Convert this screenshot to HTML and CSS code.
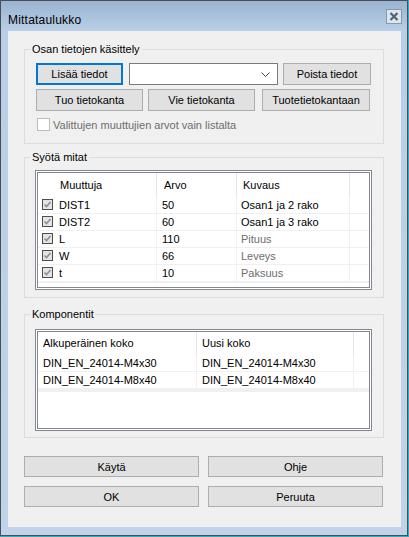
FILE: index.html
```html
<!DOCTYPE html>
<html>
<head>
  <meta charset="UTF-8">
  <title>Mittataulukko</title>
  <link rel="stylesheet" href="styles.css">
</head>
<body>
  <div class="window">
    <div class="titlebar">
      <span class="title">Mittataulukko</span>
      <button class="close" title="Sulje">
        <svg width="14" height="13" viewBox="0 0 14 13"><path d="M3.5 3 L10.5 10 M10.5 3 L3.5 10" stroke="#55616e" stroke-width="2.2"/></svg>
      </button>
    </div>

    <div class="client">
      <fieldset class="group group-data">
        <legend>Osan tietojen käsittely</legend>
        <div class="group-body">
          <div class="btn-row">
            <button class="btn btn-default w-add">Lisää tiedot</button>
            <div class="combo">
              <svg width="9" height="5" viewBox="0 0 9 5"><polyline points="0.5,0.5 4.5,4.5 8.5,0.5" fill="none" stroke="#444" stroke-width="1"/></svg>
            </div>
            <button class="btn w-remove">Poista tiedot</button>
          </div>
          <div class="btn-row row-db">
            <button class="btn w-import">Tuo tietokanta</button>
            <button class="btn w-export">Vie tietokanta</button>
            <button class="btn w-product">Tuotetietokantaan</button>
          </div>
          <label class="check disabled">
            <span class="check-box"></span>
            Valittujen muuttujien arvot vain listalta
          </label>
        </div>
      </fieldset>

      <fieldset class="group group-dims">
        <legend>Syötä mitat</legend>
        <div class="group-body">
          <div class="listview">
            <div class="listview-inner">
              <table class="list list-dims">
                <colgroup><col style="width:119px"><col style="width:80px"><col style="width:113px"><col></colgroup>
                <thead>
                  <tr><th class="h-var">Muuttuja</th><th class="h-val">Arvo</th><th class="h-desc">Kuvaus</th><th class="h-fill"></th></tr>
                </thead>
                <tbody id="dims-body"></tbody>
              </table>
            </div>
          </div>
        </div>
      </fieldset>

      <fieldset class="group group-parts">
        <legend>Komponentit</legend>
        <div class="group-body">
          <div class="listview listview-parts">
            <div class="listview-inner">
              <table class="list list-parts">
                <colgroup><col style="width:159px"><col style="width:157px"><col></colgroup>
                <thead>
                  <tr><th>Alkuperäinen koko</th><th>Uusi koko</th><th class="h-fill"></th></tr>
                </thead>
                <tbody>
                  <tr><td>DIN_EN_24014-M4x30</td><td>DIN_EN_24014-M4x30</td><td class="fill"></td></tr>
                  <tr><td>DIN_EN_24014-M8x40</td><td>DIN_EN_24014-M8x40</td><td class="fill"></td></tr>
                  <tr><td></td><td></td><td class="fill"></td></tr>
                  <tr><td></td><td></td><td class="fill"></td></tr>
                  <tr><td></td><td></td><td class="fill"></td></tr>
                </tbody>
              </table>
            </div>
          </div>
        </div>
      </fieldset>

      <div class="actions">
        <button class="btn">Käytä</button>
        <button class="btn">Ohje</button>
        <button class="btn">OK</button>
        <button class="btn">Peruuta</button>
      </div>
    </div>
  </div>

  <script>
    // Mitat: nimi, arvo, kuvaus, onko kuvaus oletusteksti (harmaa)
    const dims = [
      ['DIST1', '50', 'Osan1 ja 2 rako', false],
      ['DIST2', '60', 'Osan1 ja 3 rako', false],
      ['L', '110', 'Pituus', true],
      ['W', '66', 'Leveys', true],
      ['t', '10', 'Paksuus', true]
    ];

    const checkSvg = '<svg class="row-check" width="11" height="11" viewBox="0 0 11 11">' +
      '<rect x="0.5" y="0.5" width="10" height="10" fill="#e4e4e4" stroke="#4d4d4d"/>' +
      '<polyline points="2.5,5.5 4.5,7.5 8.5,3" fill="none" stroke="#8f8f8f" stroke-width="1.6"/></svg>';

    function renderDims() {
      const body = document.getElementById('dims-body');
      body.innerHTML = dims.map(d => `
        <tr>
          <td class="var">${checkSvg}${d[0]}</td>
          <td class="val">${d[1]}</td>
          <td class="desc ${d[3] ? 'muted' : ''}">${d[2]}</td>
          <td class="fill"></td>
        </tr>
      `).join('') + '<tr><td></td><td></td><td></td><td class="fill"></td></tr>';
    }

    renderDims();
  </script>
</body>
</html>
```

FILE: styles.css
```css
* {
  box-sizing: border-box;
}

body {
  margin: 0;
  background: #38a7c0;
  font-family: "Liberation Sans", Arial, sans-serif;
  font-size: 11px;
  color: #000;
}

.window {
  width: 408px;
  height: 536px;
  border: 1px solid #4a4f55;
  background: linear-gradient(#99b4d1, #b9cfe7 30px, #bfd4ea);
  display: flex;
  flex-direction: column;
}

/* Title bar */
.titlebar {
  height: 30px;
  display: flex;
  justify-content: space-between;
  align-items: flex-start;
  padding: 0 5px 0 7px;
}

.title {
  padding-top: 12px;
  font-size: 12px;
  line-height: 14px;
  letter-spacing: 0.2px;
}

.close {
  margin-top: 8px;
  width: 16px;
  height: 15px;
  padding: 0;
  border: 1px solid #8799ad;
  background: #dbe5ef;
  display: flex;
  align-items: center;
  justify-content: center;
}

/* Client area */
.client {
  flex: 1;
  margin: 0 6px 8px 7px;
  background: #f0f0f0;
  padding: 0 17px 0 16px;
}

.group {
  margin: 0;
  padding: 0;
  border: 1px solid #dcdcdc;
  min-width: 0;
}

.group legend {
  margin-left: 5px;
  padding: 0 2px;
  line-height: 13px;
}

.group-data {
  margin-top: 12px;
}

.group-data .group-body {
  padding: 7px 0 10px 11px;
}

.group-dims {
  margin-top: 7px;
}

.group-dims .group-body {
  padding: 6px 0 7px 10px;
}

.group-parts {
  margin-top: 10px;
}

.group-parts .group-body {
  padding: 8px 0 6px 10px;
}

/* Buttons */
.btn {
  height: 22px;
  padding: 0;
  border: 1px solid #adadad;
  background: #e1e1e1;
  font-family: inherit;
  font-size: 11px;
  color: #000;
}

.btn-default {
  border: 2px solid #0078d7;
}

.btn-row {
  display: flex;
}

.row-db {
  margin-top: 4px;
}

.w-add { width: 87px; }
.w-remove { width: 88px; margin-left: 5px; }
.w-import { width: 107px; }
.w-export { width: 107px; margin-left: 5px; }
.w-product { width: 108px; margin-left: 7px; }

.combo {
  width: 149px;
  height: 22px;
  margin-left: 6px;
  border: 1px solid #7a7a7a;
  background: #fff;
  display: flex;
  align-items: center;
  justify-content: flex-end;
  padding-right: 7px;
}

.check {
  margin-top: 5px;
  height: 17px;
  display: flex;
  align-items: center;
  gap: 3px;
}

.check-box {
  margin-left: 1px;
  width: 13px;
  height: 13px;
  border: 1px solid #bcbcbc;
  background: #fff;
}

.check.disabled {
  color: #6d6d6d;
}

/* List views */
.listview {
  width: 337px;
  height: 120px;
  border: 1px solid #828790;
  padding: 1px;
  background: #fff;
}

.listview-parts {
  height: 102px;
}

.listview-inner {
  height: 100%;
  border: 1px solid #828790;
  overflow: hidden;
}

.list {
  width: 331px;
  table-layout: fixed;
  border-spacing: 0;
}

.list th {
  padding: 0 0 0 5px;
  font-weight: normal;
  text-align: left;
  line-height: 24px;
  border-right: 1px solid #e5e5e5;
  white-space: nowrap;
}

.list td {
  padding: 0 0 0 5px;
  line-height: 16px;
  border-right: 1px solid #f0f0f0;
  border-bottom: 1px solid #f0f0f0;
  white-space: nowrap;
  overflow: hidden;
}

.list th.h-fill,
.list td.fill {
  border-right: none;
}

.list-dims th.h-var { padding-left: 22px; }
.list-dims th.h-val { padding-left: 7px; }
.list-dims th.h-desc { padding-left: 6px; }
.list-dims td.var { padding-left: 4px; }
.list-dims td.desc { padding-left: 4px; }

.list-parts th {
  line-height: 23px;
}

.row-check {
  display: inline-block;
  vertical-align: -1px;
  margin-right: 6px;
}

.muted {
  color: #6d6d6d;
}

/* Dialog buttons */
.actions {
  margin-top: 18px;
  display: grid;
  grid-template-columns: 175px 175px;
  column-gap: 9px;
  row-gap: 9px;
}

.actions .btn {
  height: 21px;
}
```
